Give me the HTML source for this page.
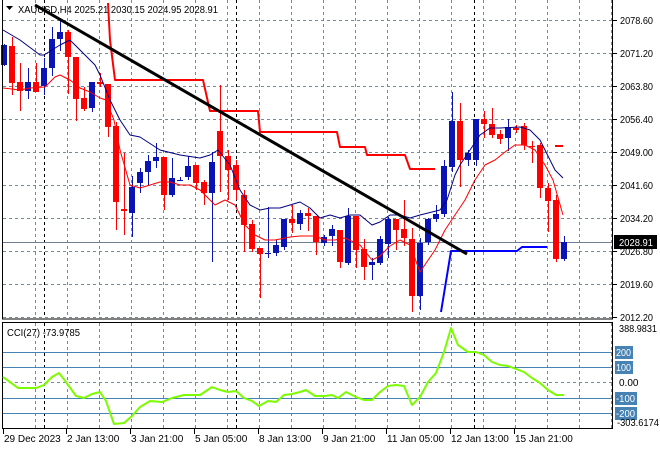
<!DOCTYPE html>
<html><head><meta charset="utf-8"><style>
html,body{margin:0;padding:0;background:#fff;width:660px;height:450px;overflow:hidden}
svg{display:block;font-family:"Liberation Sans",sans-serif}
</style></head><body>
<svg id="s" width="660" height="450" xmlns="http://www.w3.org/2000/svg">
<rect width="660" height="450" fill="#fff"/>
<g id="grid" stroke="#778899" stroke-dasharray="3,3" stroke-width="1"></g>
<g id="bg"></g>
<g id="cand"></g>
<g id="fg"></g>
<g id="txt" font-size="10" fill="#000"></g>
</svg>
<script>
const NS="http://www.w3.org/2000/svg";
function el(p,t,a,txt){const e=document.createElementNS(NS,t);for(const k in a)e.setAttribute(k,a[k]);if(txt!==undefined)e.textContent=txt;document.getElementById(p).appendChild(e);return e;}
for(let x=35;x<=611;x+=32){el('grid','line',{x1:x+.5,y1:0,x2:x+.5,y2:318});el('grid','line',{x1:x+.5,y1:323,x2:x+.5,y2:428});}
const ys=[20,53,86,119,152,185,218,251,284,317];
ys.forEach(y=>el('grid','line',{x1:3,y1:y+.5,x2:612,y2:y+.5}));
el('grid','line',{x1:3,y1:382.5,x2:612,y2:382.5});
[44,236,474].forEach(x=>{el('bg','line',{x1:x+.5,y1:0,x2:x+.5,y2:318,stroke:'#000','stroke-dasharray':'3,3'});el('bg','line',{x1:x+.5,y1:323,x2:x+.5,y2:428,stroke:'#000','stroke-dasharray':'3,3'});});
[352,367,398,413].forEach(y=>el('bg','line',{x1:3,y1:y+.5,x2:612,y2:y+.5,stroke:'#4682B4'}));
el('bg','line',{x1:3,y1:242.5,x2:612,y2:242.5,stroke:'#708090'});
el('fg','rect',{x:2.5,y:-1,width:610,height:320,fill:'none',stroke:'#000'});
el('fg','rect',{x:2.5,y:322.5,width:610,height:106,fill:'none',stroke:'#000'});
const C=[[4,65,45,44,66],[12,46,83,37,95],[20,82,91,63,111],[28,91,82,68,99],[36,82,92,63,90],[44,86,68,58,95],[52,68,39,27,76],[60,39,32,20,51],[68,32,57,30,94],[76,57,99,57,121],[84,98,109,87,111],[92,108,82,82,112],[100,82,84,73,87],[108,84,127,84,137],[116,126,202,122,230],[124,209,211,153,235],[132,213,187,176,237],[140,183,172,168,193],[148,172,161,155,185],[156,161,157,143,168],[164,157,195,157,210],[172,195,178,158,197],[180,181,180,177,181],[188,177,166,156,180],[196,165,183,165,190],[204,182,193,180,205],[212,193,162,152,262],[220,131,156,85,192],[228,156,170,150,200],[236,165,190,160,200],[244,195,225,190,252],[252,224,249,220,252],[260,248,254,248,298],[268,254,253,207,258],[276,253,245,240,256],[284,247,219,219,250],[292,219,223,205,233],[300,224,213,210,230],[308,213,216,208,231],[316,216,242,216,255],[324,243,237,235,246],[332,236,229,225,246],[340,230,262,230,268],[348,263,216,208,265],[356,216,250,216,268],[364,249,267,239,280],[372,265,262,258,280],[380,263,239,236,265],[388,244,219,217,258],[396,219,230,219,250],[404,229,238,200,246],[412,239,296,228,312],[420,296,243,238,310],[428,242,219,218,245],[436,219,214,205,222],[444,214,166,160,217],[452,167,121,92,172],[460,121,160,103,187],[468,160,153,150,166],[476,160,119,119,166],[484,119,124,111,138],[492,124,135,108,138],[500,134,139,130,144],[508,138,127,119,151],[516,128,130,125,133],[524,126,145,123,150],[532,146,147,141,163],[540,145,188,143,198],[548,188,201,183,232],[556,200,259,195,262],[564,259,242,236,261]];
C.forEach(c=>{const [x,o,cl,h,l]=c;const up=cl<o;const col=up?'#0a14b4':'#ff0000';
el('cand','line',{x1:x+.5,y1:h,x2:x+.5,y2:l,stroke:col});
const t=Math.min(o,cl),b=Math.max(o,cl);el('cand','rect',{x:x-3,y:t,width:6,height:Math.max(1,b-t),fill:col});});
function pl(pts,col,w){el('fg','polyline',{points:pts,fill:'none',stroke:col,'stroke-width':w,'stroke-linejoin':'round'});}
pl("3,30 20,40 40,55 44,55 60,45 70,40 80,50 95,65 100,75 110,100 120,120 130,135 140,137 160,150 180,155 200,158 210,155 218,150 230,165 240,190 250,205 260,210 270,208 280,208 290,205 300,202 310,208 320,218 330,215 340,218 350,215 360,215 372,225 380,222 390,215 400,215 410,218 420,215 440,210 447,200 455,175 460,165 470,150 480,135 490,128 500,128 520,127 530,130 540,140 550,160 555,170 563,178",'#000080',1);
pl("3,88 20,90 30,88 45,87 55,77 60,75 70,80 80,88 90,92 100,98 106,100 114,120 120,150 130,185 140,188 150,185 160,182 170,182 180,185 190,185 200,190 210,200 215,205 225,200 235,205 245,225 255,235 265,240 275,240 290,237 300,236 315,236 325,240 335,240 345,238 360,245 372,260 380,256 390,246 400,240 410,245 420,272 435,250 445,230 455,215 465,200 475,180 485,165 495,160 505,152 515,145 525,145 535,150 545,165 553,180 563,215",'#ff0000',1);
pl("108,3 110,40 115,80 203,80 210,111 258,111 260,132 337,132 340,147 365,147 367,155 405,155 410,169 435,169",'#ff0000',2);
pl("555,146 563,146",'#ff0000',2);
pl("441,312 451,251 517,251 522,247 547,247",'#0000ff',2);
pl("35,5 467,254",'#000',3);
pl("3,377 18,388 36,388 44,385 52,377 59,373 66,382 76,396 84,398 92,394 100,392 106,401 114,424 124,423 132,416 140,407 150,401 162,402 172,398 184,395 200,395 212,387 220,390 228,392 236,391 244,398 252,401 259,406 268,401 276,402 284,395 292,394 300,392 306,390 315,396 324,396 332,395 338,398 346,392 356,397 364,400 372,400 380,392 388,386 396,385 404,386 412,405 420,397 428,382 436,373 444,352 451,328 458,345 468,352 476,352 484,355 492,362 500,365 508,366 516,369 524,372 532,378 540,383 548,390 556,395 564,395",'#7cfc00',2);
const pr=["2078.60","2071.20","2063.80","2056.40","2049.00","2041.60","2034.20","2026.80","2019.60","2012.20"];
ys.forEach((y,i)=>{el('fg','line',{x1:612,y1:y+.5,x2:617,y2:y+.5,stroke:'#000'});el('txt','text',{x:620,y:y+4,textLength:33,lengthAdjust:'spacingAndGlyphs'},pr[i]);});
el('fg','rect',{x:614,y:235,width:43,height:14,fill:'#000'});
el('txt','text',{x:619,y:246,fill:'#fff',textLength:34,lengthAdjust:'spacingAndGlyphs'},"2028.91");
el('txt','text',{x:619,y:332,textLength:38,lengthAdjust:'spacingAndGlyphs'},"388.9831");
el('txt','text',{x:617,y:426,textLength:42,lengthAdjust:'spacingAndGlyphs'},"-303.6174");
el('txt','text',{x:619,y:386},"0.00");
[[352,"200"],[367,"100"],[398,"-100"],[413,"-200"]].forEach(a=>{const w=a[1].length>3?22:18;el('fg','rect',{x:615,y:a[0]-6,width:w,height:13,fill:'#4682B4'});el('txt','text',{x:616,y:a[0]+4,fill:'#fff',textLength:w-3,lengthAdjust:'spacingAndGlyphs'},a[1]);});
el('fg','polygon',{points:"6,6 13,6 9.5,10",fill:'#000'});
el('txt','text',{x:18,y:13,textLength:200,lengthAdjust:'spacingAndGlyphs'},"XAUUSD,H4 2025.21 2030.15 2024.95 2028.91");
el('txt','text',{x:7,y:336,textLength:73,lengthAdjust:'spacingAndGlyphs'},"CCI(27) -73.9785");
[[4,"29 Dec 2023"],[67,"2 Jan 13:00"],[131,"3 Jan 21:00"],[195,"5 Jan 05:00"],[259,"8 Jan 13:00"],[323,"9 Jan 21:00"],[387,"11 Jan 05:00"],[451,"12 Jan 13:00"],[515,"15 Jan 21:00"]].forEach(a=>{el('fg','line',{x1:a[0]-.5,y1:429,x2:a[0]-.5,y2:434,stroke:'#000'});el('txt','text',{x:a[0],y:442},a[1]);});
</script>
</body></html>
